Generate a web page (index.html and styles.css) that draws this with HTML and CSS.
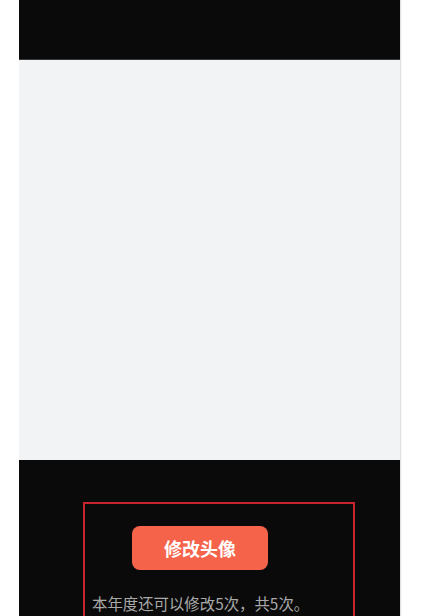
FILE: index.html
```html
<!DOCTYPE html>
<html lang="zh">
<head>
<meta charset="utf-8">
<link rel="stylesheet" href="styles.css">
</head>
<body>
<div class="phone">
  <div class="topbar"></div>
  <div class="preview"></div>
  <div class="bottom">
    <div class="highlight">
      <button class="change-btn">修改头像</button>
      <p class="note">本年度还可以修改5次，共5次。</p>
    </div>
  </div>
</div>
</body>
</html>
```
FILE: styles.css
```css
html, body {
  margin: 0;
  padding: 0;
  background: #ffffff;
  height: 616px;
  overflow: hidden;
}
.phone {
  width: 381px;
  margin-left: 19px;
  display: flex;
  flex-direction: column;
  box-shadow: 1px 0 1px rgba(0,0,0,0.12);
}
.topbar {
  height: 60px;
  background: #0a0a0a;
  border-bottom: 1px solid #3a3a3a;
  box-sizing: border-box;
}
.preview {
  height: 400px;
  background: #f2f3f5;
}
.bottom {
  height: 156px;
  overflow: hidden;
  background: #0a0a0a;
  padding-top: 42px;
  padding-left: 64px;
  box-sizing: border-box;
}
.highlight {
  width: 272px;
  height: 140px;
  box-sizing: border-box;
  border: 2px solid #c8242d;
  padding: 22px 0 0 7px;
  font-family: "Noto Sans CJK SC", "Noto Sans", sans-serif;
}
.change-btn {
  display: block;
  margin-left: 40px;
  width: 136px;
  height: 44px;
  border: none;
  border-radius: 8px;
  background: #f5634a;
  color: #ffffff;
  font-family: "Noto Sans CJK SC", "Noto Sans", sans-serif;
  font-size: 18px;
  font-weight: 700;
  padding: 0;
}
.note {
  margin: 22px 0 0 0;
  font-size: 15.4px;
  line-height: 22px;
  color: #a9a9a9;
  white-space: nowrap;
}
```
